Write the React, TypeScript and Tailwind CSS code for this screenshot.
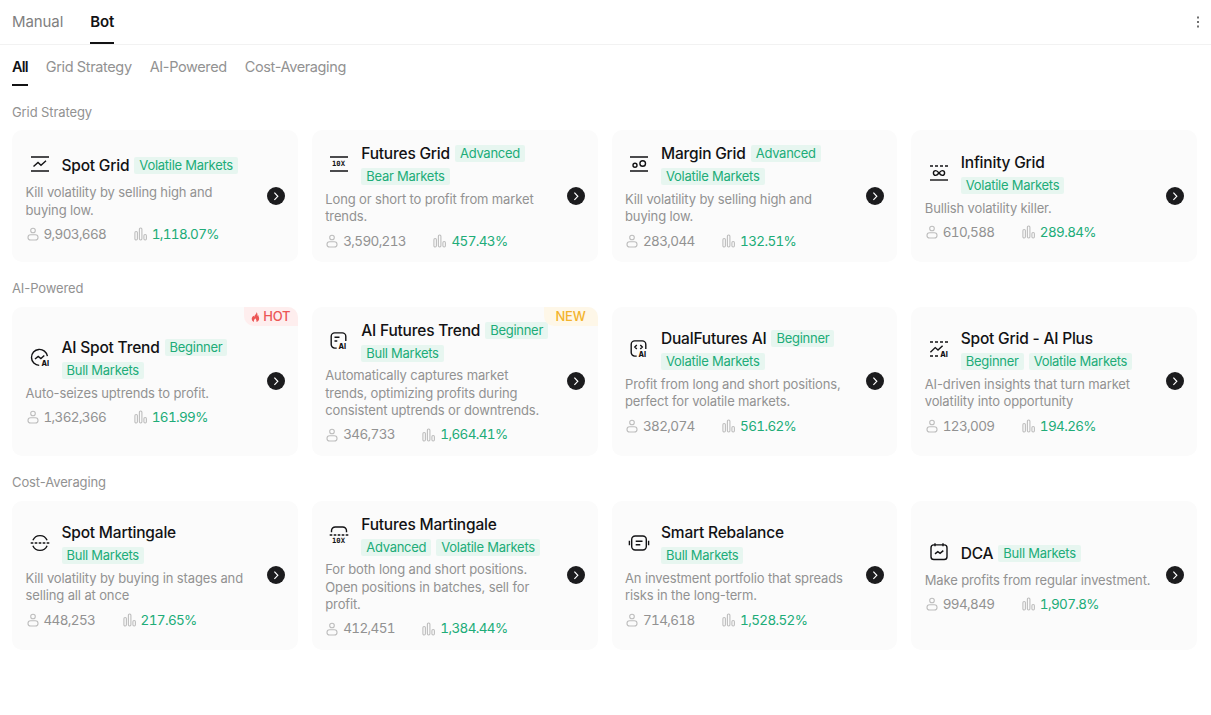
import type { ReactNode } from 'react'

type Bot = {
  name: string
  tags: string[]
  desc: string
  users: string
  pnl: string
  icon: ReactNode
  badge?: 'HOT' | 'NEW'
}

function Icon({ children }: { children: ReactNode }) {
  return (
    <svg viewBox="0 0 24 24" className="w-6 h-6" fill="none" stroke="#121214" strokeWidth="1.4">
      {children}
    </svg>
  )
}

function IconText({ x, y, mono, children }: { x: number; y: number; mono?: boolean; children: string }) {
  return (
    <text
      x={x}
      y={y}
      fontSize={7.2}
      fontWeight="800"
      fill="#121214"
      stroke="none"
      fontFamily={mono ? 'DejaVu Sans Mono, monospace' : 'Inter, sans-serif'}
    >
      {children}
    </text>
  )
}

const icons = {
  spotGrid: (
    <Icon>
      <path d="M3 5h18M3 19h18M5.5 14.6l4.5-4.1 3 2.8 5-4.5" />
    </Icon>
  ),
  futuresGrid: (
    <Icon>
      <path d="M3 5h18M3 19h18" />
      <IconText x={5} y={14.4} mono>10X</IconText>
    </Icon>
  ),
  marginGrid: (
    <Icon>
      <path d="M3 5h18M3 19h18" />
      <circle cx="8" cy="13.3" r="2" />
      <circle cx="15.7" cy="11.5" r="2.8" />
    </Icon>
  ),
  infinityGrid: (
    <Icon>
      <path d="M3 5h18" strokeDasharray="3 2" />
      <path d="M3 19h18" />
      <path d="M12 12c-1.2-1.5-2-2.4-3.2-2.4a2.4 2.4 0 0 0 0 4.8c1.2 0 2-.9 3.2-2.4s2-2.4 3.2-2.4a2.4 2.4 0 0 1 0 4.8c-1.2 0-2-.9-3.2-2.4z" />
    </Icon>
  ),
  spotTrend: (
    <Icon>
      <path d="M19.4 10.2a8 8 0 1 0-8.2 9.2M7 13l3.2-2.6 2.7 2.1 3.4-3" />
      <IconText x={13.6} y={20}>AI</IconText>
    </Icon>
  ),
  futuresTrend: (
    <Icon>
      <path d="M18.8 12V7.4a3.5 3.5 0 0 0-3.5-3.5H7.7a3.5 3.5 0 0 0-3.5 3.5v8.2a3.5 3.5 0 0 0 3.5 3.5h2M7.5 8.2h5M7.5 12h2.8" />
      <IconText x={11.5} y={19.8}>AI</IconText>
    </Icon>
  ),
  dualFutures: (
    <Icon>
      <path d="M18.8 12V7.4a3.5 3.5 0 0 0-3.5-3.5H7.7a3.5 3.5 0 0 0-3.5 3.5v8.2a3.5 3.5 0 0 0 3.5 3.5h2M9.8 8l-2 2 2 2M13.3 8l2 2-2 2" />
      <IconText x={11.5} y={19.8}>AI</IconText>
    </Icon>
  ),
  gridPlus: (
    <Icon>
      <path d="M3 5h18" strokeDasharray="3 2" />
      <path d="M3.4 15.2l4.8-4.6 2.8 2.5 4.6-4.4" />
      <path d="M3 19h8" strokeDasharray="3 2" />
      <IconText x={13.2} y={19.8}>AI</IconText>
    </Icon>
  ),
  spotMartingale: (
    <Icon>
      <path d="M4.9 9.3a7.7 7.7 0 0 1 14.2 0M4.900 14.700a7.700 7.700 0 0 0 14.200 0" />
      <path d="M2.700 12h18.600" strokeDasharray="2.600 1.400" />
    </Icon>
  ),
  futuresMartingale: (
    <Icon>
      <path d="M4.500 9.300V7.800a3.800 3.800 0 0 1 3.800-3.800h7.400a3.800 3.800 0 0 1 3.800 3.800v1.500" />
      <path d="M2.700 12h18.600" strokeDasharray="2.600 1.400" />
      <IconText x={5} y={20.2} mono>10X</IconText>
    </Icon>
  ),
  smartRebalance: (
    <Icon>
      <rect x="4.700" y="5" width="14.600" height="14" rx="3.500" />
      <path d="M2.400 9.800v4.400M21.600 9.800v4.400M8.700 10.300h6.800M8.700 13.700h4.600" />
    </Icon>
  ),
  dca: (
    <Icon>
      <rect x="4" y="4.900" width="16" height="14.600" rx="2.800" />
      <path d="M8 3.300v3M16 3.300v3M8 13.900l2.800-2.300 2.300 1.800 3.200-2.800" />
    </Icon>
  ),
}

const sections: { title: string; height: string; bots: Bot[] }[] = [
  {
    title: 'Grid Strategy',
    height: 'h-[132px]',
    bots: [
      { name: 'Spot Grid', tags: ['Volatile Markets'], desc: 'Kill volatility by selling high and buying low.', users: '9,903,668', pnl: '1,118.07%', icon: icons.spotGrid },
      { name: 'Futures Grid', tags: ['Advanced', 'Bear Markets'], desc: 'Long or short to profit from market trends.', users: '3,590,213', pnl: '457.43%', icon: icons.futuresGrid },
      { name: 'Margin Grid', tags: ['Advanced', 'Volatile Markets'], desc: 'Kill volatility by selling high and buying low.', users: '283,044', pnl: '132.51%', icon: icons.marginGrid },
      { name: 'Infinity Grid', tags: ['Volatile Markets'], desc: 'Bullish volatility killer.', users: '610,588', pnl: '289.84%', icon: icons.infinityGrid },
    ],
  },
  {
    title: 'AI-Powered',
    height: 'h-[149px] pb-px',
    bots: [
      { name: 'AI Spot Trend', tags: ['Beginner', 'Bull Markets'], desc: 'Auto-seizes uptrends to profit.', users: '1,362,366', pnl: '161.99%', icon: icons.spotTrend, badge: 'HOT' },
      { name: 'AI Futures Trend', tags: ['Beginner', 'Bull Markets'], desc: 'Automatically captures market trends, optimizing profits during consistent uptrends or downtrends.', users: '346,733', pnl: '1,664.41%', icon: icons.futuresTrend, badge: 'NEW' },
      { name: 'DualFutures AI', tags: ['Beginner', 'Volatile Markets'], desc: 'Profit from long and short positions, perfect for volatile markets.', users: '382,074', pnl: '561.62%', icon: icons.dualFutures },
      { name: 'Spot Grid - AI Plus', tags: ['Beginner', 'Volatile Markets'], desc: 'AI-driven insights that turn market volatility into opportunity', users: '123,009', pnl: '194.26%', icon: icons.gridPlus },
    ],
  },
  {
    title: 'Cost-Averaging',
    height: 'h-[149px] pb-px',
    bots: [
      { name: 'Spot Martingale', tags: ['Bull Markets'], desc: 'Kill volatility by buying in stages and selling all at once', users: '448,253', pnl: '217.65%', icon: icons.spotMartingale },
      { name: 'Futures Martingale', tags: ['Advanced', 'Volatile Markets'], desc: 'For both long and short positions. Open positions in batches, sell for profit.', users: '412,451', pnl: '1,384.44%', icon: icons.futuresMartingale },
      { name: 'Smart Rebalance', tags: ['Bull Markets'], desc: 'An investment portfolio that spreads risks in the long-term.', users: '714,618', pnl: '1,528.52%', icon: icons.smartRebalance },
      { name: 'DCA', tags: ['Bull Markets'], desc: 'Make profits from regular investment.', users: '994,849', pnl: '1,907.8%', icon: icons.dca },
    ],
  },
]

function Badge({ kind }: { kind: 'HOT' | 'NEW' }) {
  const color = kind === 'HOT' ? 'bg-[#feeeee] text-[#ec5655]' : 'bg-[#fef7e8] text-[#f3b32c]'
  return (
    <span className={`absolute top-0 right-0 w-[54px] h-[19px] rounded-tr-[10px] rounded-bl-[10px] flex items-center justify-center gap-[3px] text-[13px] font-medium tracking-[-0.2px] ${color}`}>
      {kind === 'HOT' && (
        <svg viewBox="0 0 9 11" className="w-[9px] h-2.5" fill="currentColor">
          <path d="M5.600 0C6 2 3.500 3 3.300 5.200L2.200 4.200C.8 5.500.2 6.700.4 8c.2 1.500 1.200 2.500 2.500 2.900C2.300 9.300 3.200 8 4.800 6.900c-.2 1.300 1.200 2 .7 4C7.400 10.400 8.500 9 8.500 7.200c0-1.500-.8-2.300-1-3.900l-1 1C6.900 2.600 6.600 1 5.600 0z" />
        </svg>
      )}
      {kind}
    </span>
  )
}

function Card({ bot, height }: { bot: Bot; height: string }) {
  return (
    <div className={`relative flex items-center rounded-[10px] bg-[#fbfbfb] pl-[13.5px] pr-[13px] ${height}`}>
      {bot.badge && <Badge kind={bot.badge} />}
      <div className="w-[227px] shrink-0">
        <div className="flex items-center min-h-[32.5px]">
          <div className="w-7 flex justify-center shrink-0 mr-2 -mt-0.5">{bot.icon}</div>
          <div className="w-[190px] shrink-0 flex flex-wrap items-center gap-x-[5px]">
            <span className="text-[15.5px] leading-[23px] tracking-[-0.2px] font-medium text-[#121214] whitespace-nowrap">{bot.name}</span>
            {bot.tags.map(t => (
              <span key={t} className="h-[23px] flex items-center">
                <span className="h-[17px] leading-[17px] px-[5px] rounded-[2px] bg-[#e7f6f0] text-[#20ac78] text-[13px] tracking-[-0.27px] whitespace-nowrap">{t}</span>
              </span>
            ))}
          </div>
        </div>
        <p className="mt-[2.5px] text-[13px] leading-[17.5px] tracking-[-0.13px] text-[#929292]">{bot.desc}</p>
        <div className="mt-1.5 h-[18px] flex items-center text-[13.5px] tracking-[-0.65px] tabular-nums">
          <svg viewBox="0 0 14 14" className="w-3.5 h-3.5 mr-1" fill="none" stroke="#bdbdbd" strokeWidth="1.1">
            <circle cx="7" cy="3.5" r="2.3" />
            <rect x="2" y="7.7" width="10" height="5.3" rx="2.6" />
          </svg>
          <span className="text-[#929292]">{bot.users}</span>
          <svg viewBox="0 0 14 14" className="w-3.5 h-3.5 ml-[27.5px] mr-1" fill="none" stroke="#bdbdbd" strokeWidth="1.1">
            <rect x="0.9" y="4.5" width="2.5" height="8.5" rx="1.2" />
            <rect x="5.4" y="1" width="2.5" height="12" rx="1.2" />
            <rect x="9.9" y="7.5" width="2.5" height="5.5" rx="1.2" />
          </svg>
          <span className="text-[#20ac78]">{bot.pnl}</span>
        </div>
      </div>
      <button className="ml-auto w-[18px] h-[18px] rounded-full bg-[#1c1c1e] flex items-center justify-center">
        <svg viewBox="0 0 18 18" className="w-[18px] h-[18px]" fill="none" stroke="#fff" strokeWidth="1.2">
          <path d="M7.4 5.7l3.4 3.6-3.4 3.5" />
        </svg>
      </button>
    </div>
  )
}

const filters = ['All', 'Grid Strategy', 'AI-Powered', 'Cost-Averaging']

export default function App() {
  return (
    <div className="min-h-screen bg-white font-['Inter','Liberation_Sans',sans-serif]">
      <header className="h-[45px] border-b border-[#f2f2f2] pl-3 pr-2 flex items-start justify-between">
        <nav className="flex gap-[27px] text-[15px] tracking-[-0.1px]">
          <a className="h-11 leading-[43px] text-[#808080]">Manual</a>
          <a className="h-11 leading-[43px] font-semibold text-[#121214] border-b-2 border-[#121214]">Bot</a>
        </nav>
        <svg viewBox="0 0 10 44" className="w-2.5 h-11" fill="#707070">
          <rect x="4" y="16.5" width="2" height="2" />
          <rect x="4" y="21" width="2" height="2" />
          <rect x="4" y="25.5" width="2" height="2" />
        </svg>
      </header>

      <nav className="h-[41px] pl-3 flex gap-[18px] text-[14.5px] tracking-[-0.37px]">
        {filters.map((f, i) => (
          <a key={f} className={i === 0 ? 'leading-[43px] font-semibold tracking-[-0.8px] text-[#121214] border-b-2 border-[#121214]' : 'leading-[43px] text-[#929292]'}>
            {f}
          </a>
        ))}
      </nav>

      <main className="pl-3 pr-3.5">
        {sections.map(s => (
          <section key={s.title} className="pt-[17px] [&:first-child>h2]:mb-[9px]">
            <h2 className="mb-2.5 h-[18px] leading-[18px] text-[13px] tracking-[-0.1px] text-[#929292]">{s.title}</h2>
            <div className="grid grid-cols-4 gap-3.5">
              {s.bots.map(b => <Card key={b.name} bot={b} height={s.height} />)}
            </div>
          </section>
        ))}
      </main>
    </div>
  )
}
